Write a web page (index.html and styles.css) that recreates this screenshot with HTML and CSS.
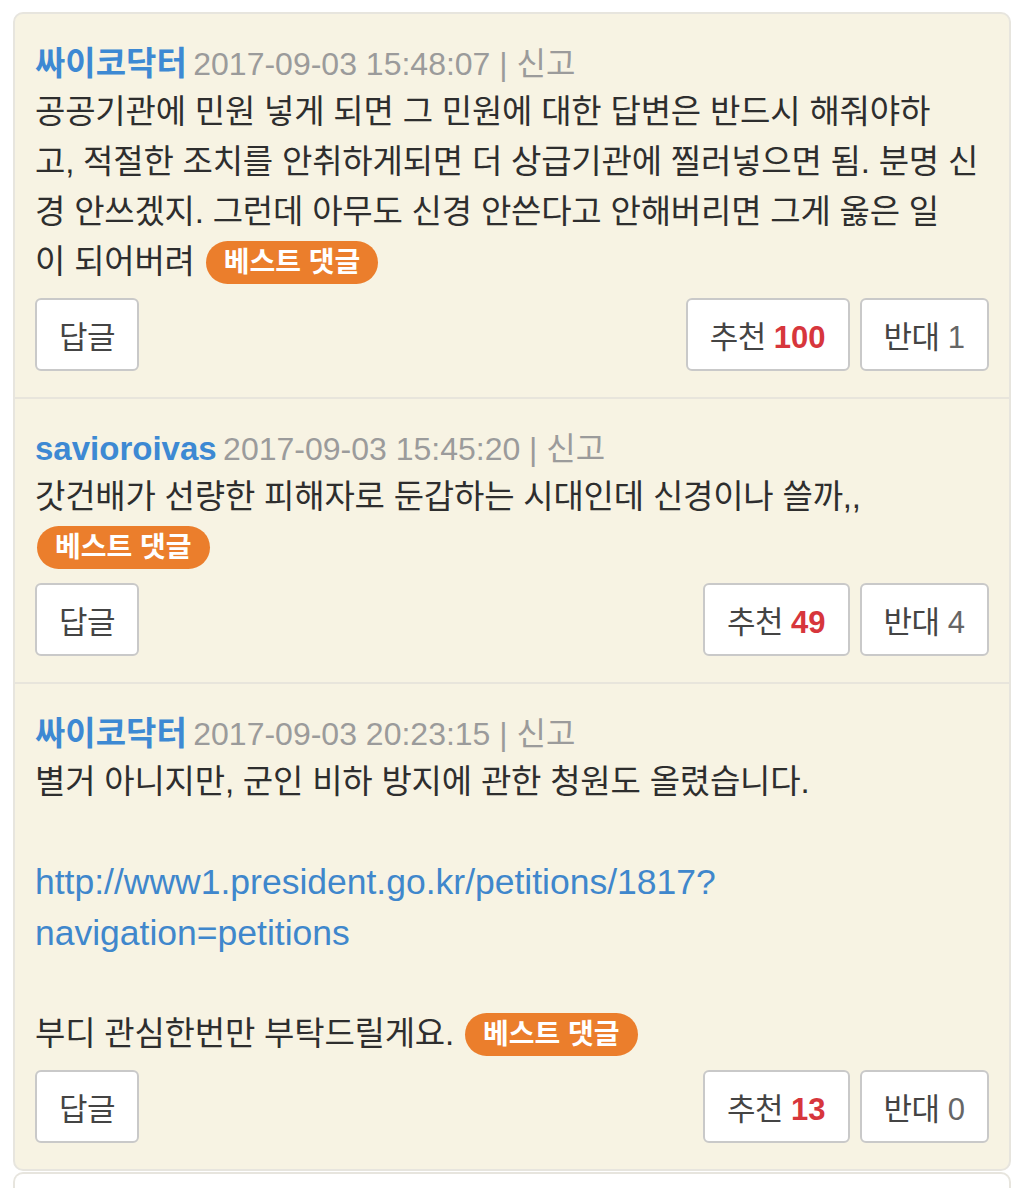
FILE: index.html
```html
<!DOCTYPE html>
<html lang="ko">
<head>
<meta charset="utf-8">
<title>베스트 댓글</title>
<link rel="stylesheet" href="styles.css">
</head>
<body>
<div class="page">
  <section class="best-list">
    <article class="comment">
      <div class="comment-head">
        <span class="author">싸이코닥터</span>
        <span class="meta">2017-09-03 15:48:07 | 신고</span>
      </div>
      <div class="comment-body">공공기관에 민원 넣게 되면 그 민원에 대한 답변은 반드시 해줘야하<br>고, 적절한 조치를 안취하게되면 더 상급기관에 찔러넣으면 됨. 분명 신<br>경 안쓰겠지. 그런데 아무도 신경 안쓴다고 안해버리면 그게 옳은 일<br>이 되어버려 <span class="badge">베스트 댓글</span></div>
      <div class="actions">
        <button class="btn">답글</button>
        <div class="votes">
          <button class="btn">추천 <b class="up">100</b></button>
          <button class="btn">반대 <span class="down">1</span></button>
        </div>
      </div>
    </article>
    <article class="comment">
      <div class="comment-head">
        <span class="author">savioroivas</span>
        <span class="meta">2017-09-03 15:45:20 | 신고</span>
      </div>
      <div class="comment-body">갓건배가 선량한 피해자로 둔갑하는 시대인데 신경이나 쓸까,, <span class="badge">베스트 댓글</span></div>
      <div class="actions">
        <button class="btn">답글</button>
        <div class="votes">
          <button class="btn">추천 <b class="up">49</b></button>
          <button class="btn">반대 <span class="down">4</span></button>
        </div>
      </div>
    </article>
    <article class="comment">
      <div class="comment-head">
        <span class="author">싸이코닥터</span>
        <span class="meta">2017-09-03 20:23:15 | 신고</span>
      </div>
      <div class="comment-body">별거 아니지만, 군인 비하 방지에 관한 청원도 올렸습니다.<br><br><a class="link" href="#">http://www1.president.go.kr/petitions/1817?<br>navigation=petitions</a><br><br>부디 관심한번만 부탁드릴게요. <span class="badge">베스트 댓글</span></div>
      <div class="actions">
        <button class="btn">답글</button>
        <div class="votes">
          <button class="btn">추천 <b class="up">13</b></button>
          <button class="btn">반대 <span class="down">0</span></button>
        </div>
      </div>
    </article>
  </section>
  <section class="next-card"></section>
</div>
</body>
</html>
```

FILE: styles.css
```css
html, body {
  margin: 0;
  padding: 0;
  background: #ffffff;
  overflow: hidden;
}

body {
  font-family: "Liberation Sans", "Noto Sans CJK KR", sans-serif;
  color: #2e2e2e;
}

.page {
  padding: 12px 13px 0;
  display: flex;
  flex-direction: column;
  gap: 1px;
}

.best-list {
  background: #f7f3e3;
  border: 2px solid #e7e5de;
  border-radius: 10px;
  display: flex;
  flex-direction: column;
}

.comment {
  padding: 27px 20px 26px;
  border-top: 2px solid #e8e5dc;
}

.comment:first-child {
  border-top: 0;
}

.comment-head {
  height: 46px;
  line-height: 46px;
  white-space: nowrap;
}

.author {
  font-size: 33px;
  font-weight: bold;
  color: #3d89d3;
  margin-right: 2px;
}

.meta {
  font-size: 32px;
  color: #9b9b9b;
}

.comment-body {
  font-size: 33px;
  line-height: 50px;
  letter-spacing: -0.2px;
  color: #2e2e2e;
}

.link {
  font-size: 35.5px;
  letter-spacing: 0;
  color: #3f87cc;
  text-decoration: none;
}

.badge {
  display: inline-block;
  vertical-align: middle;
  height: 43px;
  line-height: 43px;
  padding: 0 18px;
  margin-left: 2px;
  border-radius: 22px;
  background: #eb7e2c;
  color: #ffffff;
  font-size: 28px;
  font-weight: bold;
  letter-spacing: 0;
  position: relative;
  top: -2px;
}

.actions {
  margin-top: 11px;
  display: flex;
  justify-content: space-between;
  align-items: center;
}

.votes {
  display: flex;
  gap: 10px;
}

.btn {
  height: 73px;
  padding: 0 22px;
  background: #ffffff;
  border: 2px solid #c9c9c9;
  border-radius: 6px;
  font-family: "Liberation Sans", "Noto Sans CJK KR", sans-serif;
  font-size: 31px;
  color: #444444;
  letter-spacing: -0.5px;
  white-space: nowrap;
}

.up {
  color: #d7363c;
  font-weight: bold;
  letter-spacing: 0;
}

.down {
  color: #666666;
  letter-spacing: 0;
}

.next-card {
  height: 40px;
  background: #ffffff;
  border: 2px solid #e7e5de;
  border-bottom: 0;
  border-radius: 10px 10px 0 0;
}
```
